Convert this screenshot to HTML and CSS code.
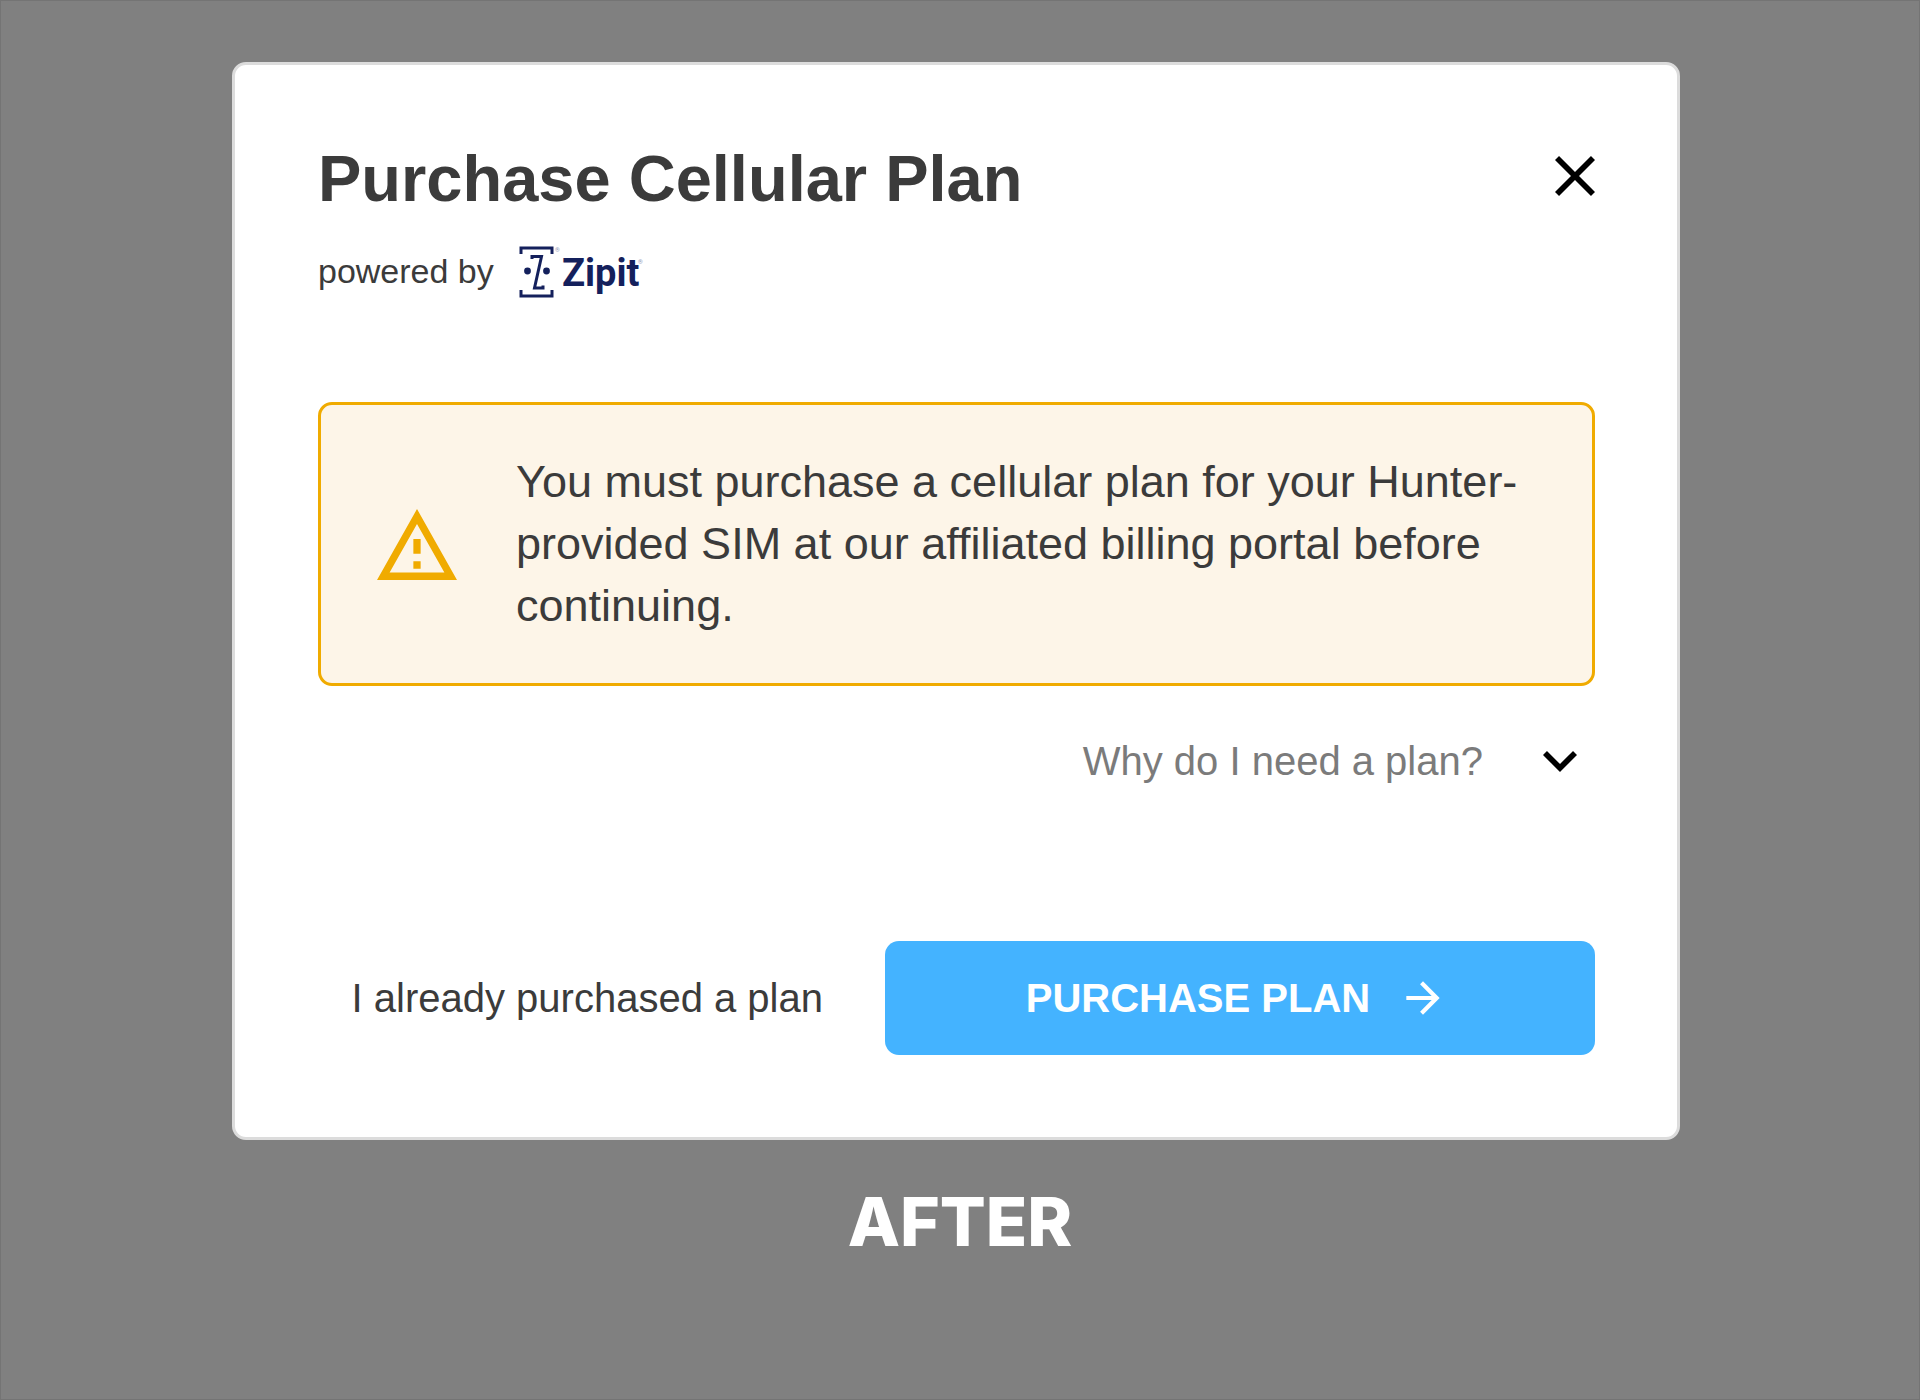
FILE: index.html
```html
<!DOCTYPE html>
<html lang="en">
<head>
<meta charset="utf-8">
<meta name="viewport" content="width=device-width, initial-scale=1">
<title>Purchase Cellular Plan</title>
<link rel="stylesheet" href="styles.css">
</head>
<body>
<main class="page">
  <section class="dialog" role="dialog" aria-labelledby="dialog-title">
    <header class="dialog-header">
      <h1 class="dialog-title" id="dialog-title">Purchase Cellular Plan</h1>
      <button class="close-button" type="button" aria-label="Close">
        <svg width="40" height="40" viewBox="5 5 14 14" aria-hidden="true"><path fill="currentColor" d="M19 6.41 17.59 5 12 10.59 6.41 5 5 6.41 10.59 12 5 17.59 6.41 19 12 13.41 17.59 19 19 17.59 13.41 12z"/></svg>
      </button>
    </header>
    <div class="provider">
      <span>powered by</span>
      <svg class="provider-logo" width="126" height="54" viewBox="0 0 126 54" role="img" aria-label="Zipit">
        <g fill="none" stroke="currentColor">
          <path stroke-width="3" d="M3 10V4H34V10M3 46V52H34V46"/>
          <path stroke-width="3" d="M14 15V12.500H23.500L16.500 44H25V41.500"/>
        </g>
        <circle cx="9.500" cy="27" r="3.400" fill="currentColor"/>
        <circle cx="28.500" cy="27" r="3.400" fill="currentColor"/>
        <text class="logo-name" x="44" y="42">Zipit</text>
        <text class="logo-mark" x="37" y="8">®</text>
        <text class="logo-mark" x="120" y="20">®</text>
      </svg>
    </div>
    <div class="alert" role="alert">
      <svg class="alert-icon" width="80" height="71" viewBox="1 2 22 19" preserveAspectRatio="none" aria-hidden="true"><path fill="currentColor" d="M12 5.990 19.530 19H4.470L12 5.990M12 2 1 21h22L12 2zm1 14h-2v2h2v-2zm0-6h-2v4h2v-4z"/></svg>
      <p class="alert-text">You must purchase a cellular plan for your Hunter-provided SIM at our affiliated billing portal before continuing.</p>
    </div>
    <button class="disclosure" type="button" aria-expanded="false">
      <span>Why do I need a plan?</span>
      <svg width="34" height="21" viewBox="6 8.590 12 7.410" aria-hidden="true"><path fill="currentColor" d="M16.590 8.590 12 13.170 7.410 8.590 6 10l6 6 6-6z"/></svg>
    </button>
    <footer class="actions">
      <button class="text-button" type="button">I already purchased a plan</button>
      <button class="primary-button" type="button">
        <span>PURCHASE PLAN</span>
        <svg width="50" height="50" viewBox="0 0 24 24" aria-hidden="true"><path fill="currentColor" d="m12 4-1.410 1.410L16.170 11H4v2h12.170l-5.580 5.590L12 20l8-8z"/></svg>
      </button>
    </footer>
  </section>
  <p class="caption">AFTER</p>
</main>
</body>
</html>
```

FILE: styles.css
```css
* {
  box-sizing: border-box;
}

body {
  margin: 0;
  background: #808080;
  color: #3b3b3b;
  font-family: "Liberation Sans", Arial, sans-serif;
}

h1,
p {
  margin: 0;
}

button {
  padding: 0;
  border: 0;
  background: none;
  color: inherit;
  font: inherit;
  cursor: pointer;
}

svg {
  display: block;
  flex: none;
}

.page {
  display: flex;
  flex-direction: column;
  align-items: center;
  min-height: 100vh;
  padding: 61px 0 40px;
  border: 1px solid #747474;
}

.dialog {
  width: 100%;
  max-width: 1448px;
  margin-right: 8px;
  padding: 76px 82px 82px 83px;
  border: 3px solid #dcdcdc;
  border-radius: 14px;
  background: #fff;
}

.dialog-header {
  display: flex;
  justify-content: space-between;
  align-items: flex-start;
}

.dialog-title {
  font-size: 65px;
  line-height: 76px;
}

.close-button {
  padding-top: 15px;
  color: #000;
}

.provider {
  display: flex;
  align-items: center;
  gap: 24px;
  height: 50px;
  margin-top: 29px;
  font-size: 34px;
  line-height: 40px;
}

.provider-logo {
  color: #14205c;
}

.logo-name {
  fill: currentColor;
  font: 700 38px Roboto, sans-serif;
}

.logo-mark {
  fill: #8f96b8;
  font: 6px Roboto, sans-serif;
}

.alert {
  display: flex;
  align-items: center;
  gap: 59px;
  margin-top: 106px;
  padding: 46px 48px 46px 56px;
  border: 3px solid #f0ab00;
  border-radius: 14px;
  background: #fdf5e8;
}

.alert-icon {
  color: #f0ab00;
}

.alert-text {
  font-size: 45px;
  line-height: 62px;
}

.disclosure {
  display: flex;
  align-items: center;
  gap: 60px;
  margin: 51px 18px 0 auto;
  color: #000;
  font-size: 40px;
  line-height: 48px;
}

.disclosure span {
  color: #7b7b7b;
}

.actions {
  display: flex;
  justify-content: flex-end;
  align-items: center;
  gap: 62px;
  margin-top: 156px;
  font-size: 40px;
  line-height: 48px;
}

.primary-button {
  display: flex;
  justify-content: center;
  align-items: center;
  gap: 28px;
  flex: 0 1 710px;
  padding: 32px 6px 32px 0;
  border-radius: 14px;
  background: #44b3ff;
  color: #fff;
  font-weight: 700;
}

.caption {
  margin-top: 39px;
  color: #fff;
  font: 800 68px/84px Inter, sans-serif;
}
```
